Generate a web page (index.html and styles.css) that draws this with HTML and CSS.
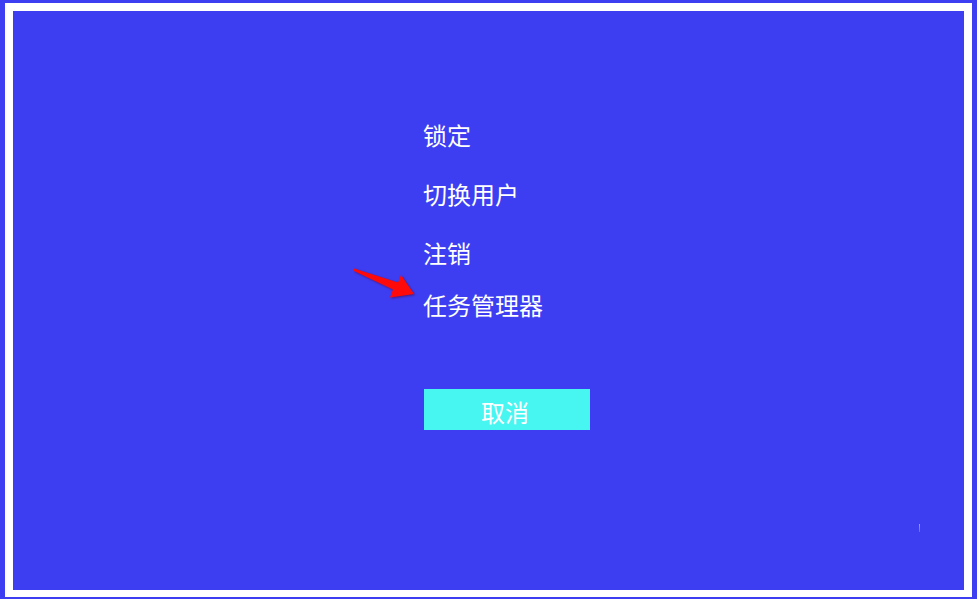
FILE: index.html
```html
<!DOCTYPE html>
<html lang="zh-CN">
<head>
<meta charset="utf-8">
<title>锁定</title>
<link rel="stylesheet" href="styles.css">
</head>
<body>
<div class="frame">
  <div class="screen">
    <ul class="menu">
      <li class="item item-lock">锁定</li>
      <li class="item item-switch">切换用户</li>
      <li class="item item-logout">注销</li>
      <li class="item item-task">任务管理器</li>
    </ul>
    <button class="cancel">取消</button>
    <svg class="arrow" width="70" height="40" viewBox="0 0 70 40" aria-hidden="true">
      <polygon points="4,6.5 48,20.5 51,13 64,32 40,35.5 43,27.5 4,9" fill="#ff0a0a"/>
    </svg>
    <span class="mark"></span>
  </div>
</div>
</body>
</html>
```

FILE: styles.css
```css
html, body {
  margin: 0;
  padding: 0;
}
body {
  background: #3d3ef2;
  width: 977px;
  height: 599px;
  overflow: hidden;
  font-family: "Noto Sans CJK SC", "Noto Sans", sans-serif;
}
.frame {
  margin: 3px 5px 2px 5px;
  padding: 8px 8px 7px 8px;
  background: #ffffff;
}
.screen {
  position: relative;
  height: 579px;
  background: #3d3ef2;
  display: flex;
  flex-direction: column;
  align-items: flex-start;
  padding-left: 410px;
  box-sizing: border-box;
}
.menu {
  list-style: none;
  margin: 108px 0 0 0;
  padding: 0;
  display: flex;
  flex-direction: column;
}
.item {
  color: #ffffff;
  font-size: 24px;
  line-height: 32px;
  height: 32px;
  white-space: nowrap;
}
.item-switch { margin-top: 27px; }
.item-logout { margin-top: 27px; }
.item-task { margin-top: 19.5px; }
.cancel {
  margin: 68.5px 0 0 1px;
  width: 166px;
  height: 41px;
  border: none;
  background: #47f5f1;
  color: #ffffff;
  font-family: "Noto Sans CJK SC", "Noto Sans", sans-serif;
  font-size: 24px;
  line-height: 32px;
  padding: 5px 4px 0 0;
  cursor: default;
}
.arrow {
  position: absolute;
  left: 337px;
  top: 251px;
  filter: drop-shadow(1px 1px 1px rgba(90, 0, 40, 0.6));
}
.mark {
  position: absolute;
  left: 906px;
  top: 513px;
  width: 1px;
  height: 8px;
  background: linear-gradient(#9c9df7, #6667f2);
}
```
